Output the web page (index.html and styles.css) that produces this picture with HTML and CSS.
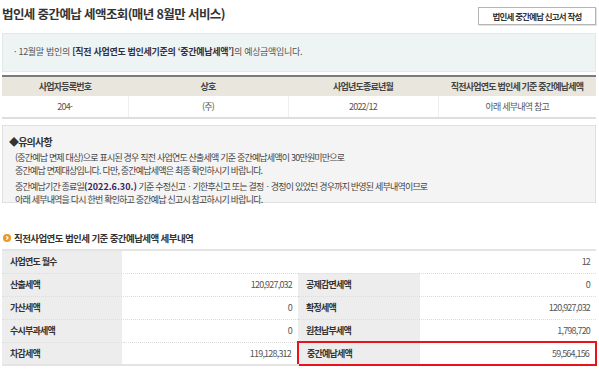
FILE: index.html
```html
<!DOCTYPE html>
<html lang="ko">
<head>
<meta charset="utf-8">
<title>법인세 중간예납 세액조회</title>
<link rel="stylesheet" href="styles.css">
</head>
<body>
<div class="page">
  <div class="top">
    <h1 class="title">법인세 중간예납 세액조회(매년 8월만 서비스)</h1>
    <button class="btn" type="button">법인세 중간예납 신고서 작성</button>
  </div>

  <div class="info">· 12월말 법인의 <b>[직전 사업연도 법인세기준의 ‘중간예납세액’]</b>의 예상금액입니다.</div>

  <table class="summary">
    <colgroup>
      <col class="c1"><col class="c2"><col class="c3"><col class="c4">
    </colgroup>
    <thead>
      <tr><th>사업자등록번호</th><th>상호</th><th>사업년도종료년월</th><th>직전사업연도 법인세 기준 중간예납세액</th></tr>
    </thead>
    <tbody>
      <tr><td>204-</td><td>(주)</td><td>2022/12</td><td>아래 세부내역 참고</td></tr>
    </tbody>
  </table>

  <div class="notice">
    <p class="notice-title">◆유의사항</p>
    <p>(중간예납 면제 대상)으로 표시된 경우 직전 사업연도 산출세액 기준 중간예납세액이 30만원미만으로<br>중간예납 면제대상입니다. 다만, 중간예납세액은 최종 확인하시기 바랍니다.</p>
    <p>중간예납기간 종료일<b class="date">(2022.6.30.)</b> 기준 수정신고ㆍ기한후신고 또는 결정ㆍ경정이 있었던 경우까지 반영된 세부내역이므로<br>아래 세부내역을 다시 한번 확인하고 중간예납 신고시 참고하시기 바랍니다.</p>
  </div>

  <h2 class="section">
    <svg class="bullet" width="8" height="8" viewBox="0 0 8 8"><circle cx="4" cy="4" r="4" fill="#f0961e"/><path d="M3.2 2.3 L5 4 L3.2 5.7" fill="none" stroke="#fff" stroke-width="1.2"/></svg>
    직전사업연도 법인세 기준 중간예납세액 세부내역
  </h2>

  <table class="detail">
    <colgroup>
      <col class="d1"><col class="d2"><col class="d3"><col class="d4">
    </colgroup>
    <tbody>
      <tr><th>사업연도 월수</th><td colspan="3">12</td></tr>
      <tr><th>산출세액</th><td>120,927,032</td><th>공제감면세액</th><td>0</td></tr>
      <tr><th>가산세액</th><td>0</td><th>확정세액</th><td>120,927,032</td></tr>
      <tr><th>수시부과세액</th><td>0</td><th>원천납부세액</th><td>1,798,720</td></tr>
      <tr class="last"><th>차감세액</th><td>119,128,312</td><th class="hl-l">중간예납세액</th><td class="hl-r">59,564,156</td></tr>
    </tbody>
  </table>
</div>
</body>
</html>
```

FILE: styles.css
```css
* { box-sizing: border-box; }
html, body { margin: 0; padding: 0; background: #fff; }
body {
  font-family: "Noto Sans CJK KR", "Noto Sans", sans-serif;
  font-size: 9px;
  letter-spacing: -0.8px;
  color: #444;
}
.page { width: 599px; padding: 0 3px 0 2px; }

.top {
  height: 28px;
  display: flex;
  align-items: center;
  justify-content: space-between;
}
.title {
  margin: 0;
  font-size: 12.5px;
  letter-spacing: -0.6px;
  font-weight: bold;
  color: #333;
  line-height: 14px;
}
.btn {
  height: 18px;
  width: 118px;
  margin-top: 3px;
  padding: 0;
  border: 1px solid #b5b5b5;
  background: #fff;
  font-family: inherit;
  font-size: 8.5px;
  letter-spacing: -0.8px;
  font-weight: bold;
  color: #333;
  box-shadow: 1px 1px 0 #e2e2e2;
}

.info {
  margin-top: 5px;
  height: 39px;
  background: #eef4f4;
  border: 1px solid #e1eaea;
  display: flex;
  align-items: center;
  padding-left: 11px;
  padding-bottom: 3px;
  color: #555;
  letter-spacing: -0.3px;
  white-space: pre;
}
.info b { color: #332f45; }

.summary {
  margin-top: 3px;
  width: 594px;
  border-collapse: collapse;
  table-layout: fixed;
  border-top: 2px solid #7b7b7b;
  border-bottom: 2px solid #dedede;
}
.c1 { width: 126px; }
.c2 { width: 160px; }
.c3 { width: 150px; }
.c4 { width: 158px; }
.summary th {
  height: 20px;
  padding: 0;
  background: #e9e6de;
  font-weight: bold;
  color: #444;
  border-top: 1px solid #f6f5f2;
}
.summary td {
  height: 22px;
  padding: 0;
  text-align: center;
  color: #555;
  border-left: 1px solid #eeeeee;
}
.summary td:first-child { border-left: 0; }

.notice {
  margin-top: 6px;
  height: 78px;
  background: #f4f4f4;
  border: 1px solid #e0e0e0;
  padding: 8px 0 0 12px;
  color: #444;
}
.notice p { margin: 0 0 3px 0; line-height: 13px; }
.notice-title {
  font-size: 10px;
  font-weight: bold;
  color: #333;
  margin-left: -6px !important;
  margin-bottom: 1px !important;
  line-height: 16px !important;
}
.date { color: #3a2466; letter-spacing: 0; }

.section {
  margin: 27px 0 0 0;
  height: 16px;
  display: flex;
  align-items: center;
  gap: 3px;
  padding-left: 1px;
  font-size: 9.5px;
  letter-spacing: -0.6px;
  font-weight: bold;
  color: #333;
}
.bullet { flex: none; }

.detail {
  margin-top: 3px;
  width: 594px;
  border-collapse: collapse;
  table-layout: fixed;
  border-top: 2px solid #e4e4e4;
}
.d1 { width: 120px; }
.d2 { width: 176px; }
.d3 { width: 122px; }
.d4 { width: 176px; }
.detail th, .detail td {
  height: 23px;
  padding: 0 6px;
  border-bottom: 1px dotted #dcdcdc;
}
.detail th {
  text-align: left;
  background: #ededed;
  font-weight: bold;
  color: #333;
  padding-left: 8px;
  border-right: 1px solid #fff;
}
.detail td {
  text-align: right;
  color: #555;
  background: #fff;
}
.detail tr.last th, .detail tr.last td { border-bottom: 2px solid #e4e4e4; }
.detail .hl-l {
  border-left: 2px solid #e8141c;
  border-top: 2px solid #e8141c;
  border-bottom: 2px solid #e8141c !important;
}
.detail .hl-r {
  border-right: 2px solid #e8141c;
  border-top: 2px solid #e8141c;
  border-bottom: 2px solid #e8141c !important;
}
```
